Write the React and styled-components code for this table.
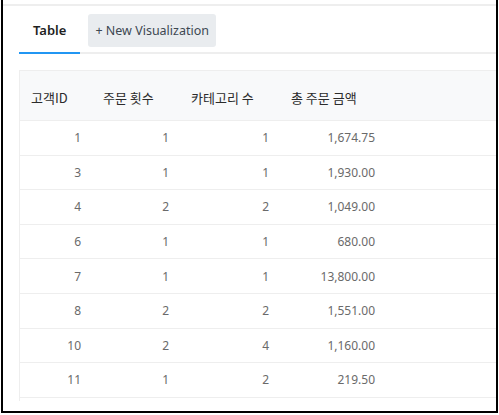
import React from "react";
import styled, { createGlobalStyle } from "styled-components";

const GlobalStyle = createGlobalStyle`
  html, body { margin: 0; padding: 0; background: #fff; }
  body { font-family: "Noto Sans", "Noto Sans CJK KR", sans-serif; }
  * { box-sizing: border-box; }
`;

const Page = styled.div`
  width: 499px;
  height: 415px;
  padding: 0 1px 2px 1px;
`;

const Frame = styled.div`
  height: 413px;
  border: 2px solid #000;
  border-top: none;
  display: flex;
  flex-direction: column;
  overflow: hidden;
  background: #fff;
`;

const TopRule = styled.div`
  margin-top: 4px;
  border-top: 2px solid #eeeeee;
  padding: 8px 0 0 16px;
`;

const TabBar = styled.div`
  display: flex;
  align-items: flex-start;
  gap: 8px;
  border-bottom: 2px solid #eeeeee;
`;

const Tab = styled.div`
  height: 40px;
  padding: 0 14px 7px;
  margin-bottom: -2px;
  display: flex;
  align-items: center;
  font-size: 13px;
  font-weight: 600;
  color: #1f1f1f;
  border-bottom: 2px solid ${(p) => (p.$active ? "#2196f3" : "transparent")};
`;

const AddButton = styled.button`
  height: 33px;
  padding: 0 7px;
  border: none;
  border-radius: 3px;
  background: #e9ecef;
  color: #3d4852;
  font-family: "Noto Sans", sans-serif;
  font-size: 12.5px;
  display: flex;
  align-items: center;
`;

const TableBox = styled.div`
  flex: 1;
  margin: 16px -40px 10px 16px;
  border-left: 1px solid #eeeeee;
  border-top: 1px solid #eeeeee;
  overflow: hidden;
`;

const Row = styled.div`
  display: grid;
  grid-template-columns: 72px 88px 100px 106px 1fr;
  height: ${(p) => (p.$head ? "50px" : "34.6px")};
  border-bottom: 1px solid #eeeeee;
  background: ${(p) => (p.$head ? "#f8f9fa" : "#fff")};
`;

const HeadCell = styled.div`
  display: flex;
  align-items: center;
  padding: 4px 11px 0;
  font-family: "Noto Sans CJK KR", "Noto Sans", sans-serif;
  font-size: 13px;
  color: #2b2b2b;
  white-space: nowrap;
`;

const Cell = styled.div`
  display: flex;
  align-items: center;
  justify-content: flex-end;
  padding: 0 11px;
  font-size: 12px;
  color: #6a6a6a;
  white-space: nowrap;
`;

const headers = ["고객ID", "주문 횟수", "카테고리 수", "총 주문 금액"];

const rows = [
  [1, 1, 1, "1,674.75"],
  [3, 1, 1, "1,930.00"],
  [4, 2, 2, "1,049.00"],
  [6, 1, 1, "680.00"],
  [7, 1, 1, "13,800.00"],
  [8, 2, 2, "1,551.00"],
  [10, 2, 4, "1,160.00"],
  [11, 1, 2, "219.50"],
];

export default function App() {
  return (
    <>
      <GlobalStyle />
      <Page>
        <Frame>
          <TopRule>
            <TabBar>
              <Tab $active>Table</Tab>
              <AddButton>+ New Visualization</AddButton>
            </TabBar>
          </TopRule>
          <TableBox>
            <Row $head>
              {headers.map((h) => (
                <HeadCell key={h}>{h}</HeadCell>
              ))}
              <HeadCell />
            </Row>
            {rows.map((r, i) => (
              <Row key={i}>
                {r.map((v, j) => (
                  <Cell key={j}>{v}</Cell>
                ))}
                <Cell />
              </Row>
            ))}
          </TableBox>
        </Frame>
      </Page>
    </>
  );
}
